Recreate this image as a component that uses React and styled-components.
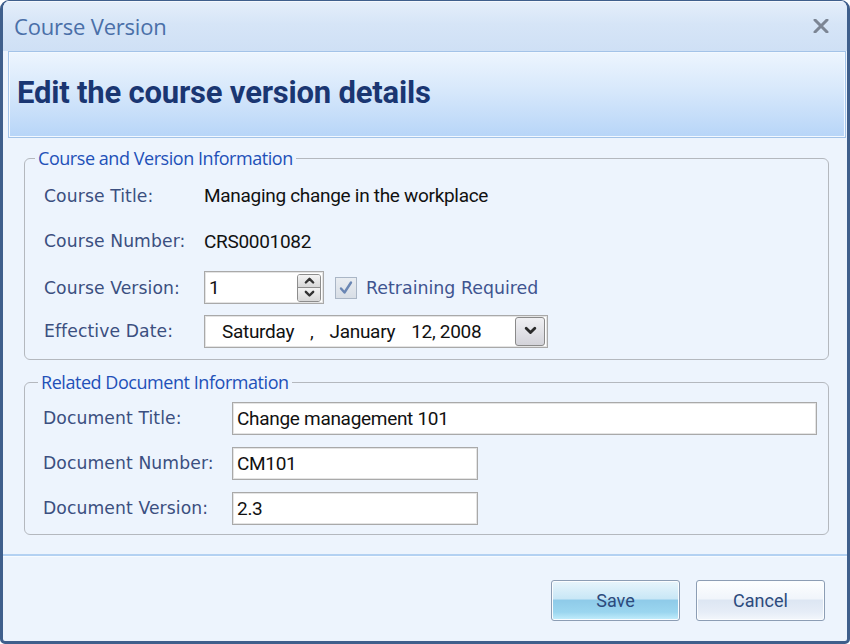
import React from "react";
import styled, { createGlobalStyle } from "styled-components";

const Global = createGlobalStyle`
  html, body {
    margin: 0;
    padding: 0;
    background: #ffffff;
  }
  * {
    box-sizing: border-box;
  }
`;

const Window = styled.div`
  width: 850px;
  height: 644px;
  display: flex;
  flex-direction: column;
  border: 3px solid #3f5f8c;
  border-top-width: 1px;
  border-radius: 9px 9px 5px 5px;
  background: #edf4fd;
  overflow: hidden;
  font-family: "Open Sans", "DejaVu Sans", sans-serif;
`;

const TitleBar = styled.div`
  height: 50px;
  flex: none;
  display: flex;
  align-items: center;
  justify-content: space-between;
  padding: 0 16px 2px 11px;
  background: linear-gradient(#e4eefa, #d6e5f7 45%, #cfe0f5);
  border-top: 1px solid #f4f8fd;
`;

const WindowTitle = styled.span`
  font-size: 22px;
  color: #4a6fa8;
  letter-spacing: -0.2px;
`;

const CloseButton = styled.button`
  border: none;
  background: none;
  padding: 0;
  width: 20px;
  height: 20px;
  display: flex;
  align-items: center;
  justify-content: center;
`;

const Header = styled.div`
  height: 87px;
  flex: none;
  margin: 0 1px 0 5px;
  display: flex;
  align-items: center;
  padding: 0 8px 5px;
  border: 1px solid #a3c3e8;
  box-shadow: inset 0 0 0 1px #f2f8ff;
  background: linear-gradient(#edf5fe, #d7e8fb 45%, #b7d5f8);
`;

const HeaderTitle = styled.h1`
  margin: 0;
  font-family: "Roboto", "Open Sans", sans-serif;
  font-size: 31px;
  font-weight: 700;
  color: #1a3672;
  letter-spacing: -0.2px;
`;

const Body = styled.div`
  flex: 1;
  display: flex;
  flex-direction: column;
  gap: 11px;
  padding: 9px 18px 0 21px;
`;

const Group = styled.fieldset`
  margin: 0;
  padding: ${(p) => p.$pad};
  border: 1px solid #b4b8be;
  border-radius: 6px;
  min-width: 0;
`;

const Legend = styled.legend`
  padding: 0 3px;
  margin-left: ${(p) => p.$indent}px;
  font-family: "Open Sans", "DejaVu Sans", sans-serif;
  font-size: 18px;
  color: #2250b8;
  letter-spacing: -0.45px;
  line-height: 22px;
`;

const Row = styled.div`
  height: ${(p) => p.$h}px;
  display: flex;
  align-items: center;
`;

const Label = styled.label`
  width: ${(p) => p.$w}px;
  flex: none;
  font-family: "DejaVu Sans", sans-serif;
  font-size: 17.2px;
  color: #3b4f80;
  letter-spacing: 0.1px;
`;

const Value = styled.span`
  font-family: "Roboto", "Liberation Sans", sans-serif;
  font-size: 19px;
  color: #111;
  letter-spacing: -0.3px;
`;

const TextBox = styled.div`
  width: ${(p) => p.$w}px;
  height: 33px;
  display: flex;
  align-items: center;
  padding: 0 4px;
  background: #ffffff;
  border: 1px solid #a9a9a9;
  box-shadow: inset 0 0 0 1px #e4e4e4;
  font-family: "Roboto", "Liberation Sans", sans-serif;
  font-size: 19px;
  color: #111;
  letter-spacing: -0.3px;
`;

const SpinBox = styled(TextBox)`
  justify-content: space-between;
  padding: 0 2px 0 4px;
`;

const Spinner = styled.div`
  width: 24px;
  height: 28px;
  display: flex;
  flex-direction: column;
  border: 1px solid #8d8d8d;
  border-radius: 3px;
  overflow: hidden;
`;

const SpinHalf = styled.div`
  flex: 1;
  display: flex;
  align-items: center;
  justify-content: center;
  background: linear-gradient(#f4f4f4, #d8d8d8);
  & + & {
    border-top: 1px solid #8d8d8d;
  }
`;

const Check = styled.div`
  width: 22px;
  height: 22px;
  margin: 0 9px 0 11px;
  display: flex;
  align-items: center;
  justify-content: center;
  border: 1px solid #aab6c6;
  background: linear-gradient(#e9edf2, #d8dee6);
`;

const CheckText = styled.span`
  font-family: "DejaVu Sans", sans-serif;
  font-size: 17.4px;
  color: #3f5490;
`;

const DateBox = styled(TextBox)`
  padding: 0 2px 0 17px;
  justify-content: space-between;
`;

const DateParts = styled.div`
  display: flex;
  gap: ${(p) => p.$gap}px;
  white-space: pre;
`;

const DropButton = styled.div`
  width: 30px;
  height: 29px;
  display: flex;
  align-items: center;
  justify-content: center;
  border: 1px solid #8a8a8a;
  border-radius: 3px;
  background: linear-gradient(#f0f0f3, #d3d3da);
`;

const Separator = styled.div`
  height: 3px;
  flex: none;
  margin-top: 19px;
  background: #b3d1f2;
  border-bottom: 1px solid #f7fbff;
`;

const Footer = styled.div`
  flex: 1;
  display: flex;
  justify-content: flex-end;
  align-items: flex-start;
  gap: 16px;
  padding: 23px 22px 0 0;
`;

const Button = styled.button`
  width: 129px;
  height: 41px;
  border: 1px solid #8c9db4;
  border-radius: 3px;
  box-shadow: inset 0 0 0 1px #fbfdff;
  font-family: "Roboto", "Open Sans", sans-serif;
  font-size: 18px;
  color: #2c4a7c;
  background: ${(p) =>
    p.$primary
      ? "linear-gradient(#e8f5fc, #c9e7f6 45%, #8fcbe9 50%, #9bd6ef 80%, #c4eefc)"
      : "linear-gradient(#fdfeff, #f1f5fb 45%, #dde6f3 50%, #e6edf7 80%, #f3f7fc)"};
`;

function Chevron({ dir = "down", size = 12, color = "#333" }) {
  const d = dir === "up" ? "M2 8 L6 4 L10 8" : "M2 4 L6 8 L10 4";
  return (
    <svg width={size} height={size * 0.75} viewBox="0 2 12 9">
      <path d={d} fill="none" stroke={color} strokeWidth="2.6" strokeLinecap="round" strokeLinejoin="round" />
    </svg>
  );
}

function App() {
  return (
    <>
      <Global />
      <Window>
        <TitleBar>
          <WindowTitle>Course Version</WindowTitle>
          <CloseButton aria-label="Close">
            <svg width="16" height="14" viewBox="0 0 16 14">
              <path d="M2 1 L14 13 M14 1 L2 13" stroke="#7c8594" strokeWidth="3" strokeLinecap="round" />
            </svg>
          </CloseButton>
        </TitleBar>

        <Header>
          <HeaderTitle>Edit the course version details</HeaderTitle>
        </Header>

        <Body>
          <Group $pad="4px 18px 8px 19px">
            <Legend $indent={-9}>Course and Version Information</Legend>
            <Row $h={45}>
              <Label $w={160}>Course Title:</Label>
              <Value>Managing change in the workplace</Value>
            </Row>
            <Row $h={46}>
              <Label $w={160}>Course Number:</Label>
              <Value>CRS0001082</Value>
            </Row>
            <Row $h={47}>
              <Label $w={160}>Course Version:</Label>
              <SpinBox $w={120}>
                <span>1</span>
                <Spinner>
                  <SpinHalf>
                    <Chevron dir="up" size={11} />
                  </SpinHalf>
                  <SpinHalf>
                    <Chevron dir="down" size={11} />
                  </SpinHalf>
                </Spinner>
              </SpinBox>
              <Check>
                <svg width="16" height="16" viewBox="0 0 16 16">
                  <path d="M3 8.5 L6.5 12.5 L13 2.5" fill="none" stroke="#6a86b4" strokeWidth="2.4" strokeLinecap="round" strokeLinejoin="round" />
                </svg>
              </Check>
              <CheckText>Retraining Required</CheckText>
            </Row>
            <Row $h={40}>
              <Label $w={160}>Effective Date:</Label>
              <DateBox $w={344}>
                <DateParts $gap={16}>
                  <span>Saturday</span>
                  <span>,</span>
                  <span>January</span>
                  <span>12, 2008</span>
                </DateParts>
                <DropButton>
                  <Chevron dir="down" size={13} color="#2a2a2a" />
                </DropButton>
              </DateBox>
            </Row>
          </Group>

          <Group $pad="3px 10px 4px 18px">
            <Legend $indent={-5}>Related Document Information</Legend>
            <Row $h={44}>
              <Label $w={189}>Document Title:</Label>
              <TextBox $w={585}>Change management 101</TextBox>
            </Row>
            <Row $h={46}>
              <Label $w={189}>Document Number:</Label>
              <TextBox $w={246}>CM101</TextBox>
            </Row>
            <Row $h={44}>
              <Label $w={189}>Document Version:</Label>
              <TextBox $w={246}>2.3</TextBox>
            </Row>
          </Group>
        </Body>

        <Separator />
        <Footer>
          <Button $primary>Save</Button>
          <Button>Cancel</Button>
        </Footer>
      </Window>
    </>
  );
}

export default App;
